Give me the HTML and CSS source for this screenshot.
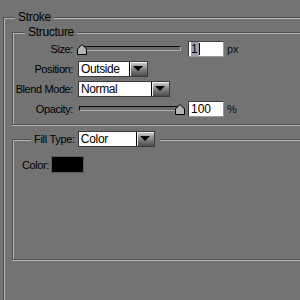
FILE: index.html
```html
<html>
  <head>
    <link rel="stylesheet" href="styles.css">
  </head>
  <body>
    <fieldset class="panel outer">
      <legend>Stroke</legend>

      <fieldset class="panel structure">
        <legend>Structure</legend>
        <div class="rows">
          <span class="label">Size:</span>
          <div class="ctl">
            <div class="slider">
              <div class="track"></div>
              <svg class="thumb" width="10" height="11" viewBox="0 0 10 11">
                <path d="M0.5 10.5 V5 L5 0.5 L9.5 5 V10.5 Z" fill="#b4b4b4" stroke="#000" />
              </svg>
            </div>
            <div class="field"><span class="hilite">1</span><span class="caret"></span></div>
            <span class="unit">px</span>
          </div>

          <span class="label">Position:</span>
          <div class="ctl">
            <div class="dropdown w-pos">
              <span class="value">Outside</span>
              <span class="arrow"></span>
            </div>
          </div>

          <span class="label">Blend Mode:</span>
          <div class="ctl">
            <div class="dropdown w-blend">
              <span class="value">Normal</span>
              <span class="arrow"></span>
            </div>
          </div>

          <span class="label">Opacity:</span>
          <div class="ctl">
            <div class="slider at-end">
              <div class="track"></div>
              <svg class="thumb" width="10" height="11" viewBox="0 0 10 11">
                <path d="M0.5 10.5 V5 L5 0.5 L9.5 5 V10.5 Z" fill="#b4b4b4" stroke="#000" />
              </svg>
            </div>
            <div class="field">100</div>
            <span class="unit">%</span>
          </div>
        </div>
      </fieldset>

      <fieldset class="panel fill">
        <legend>
          <span class="label">Fill Type:</span>
          <div class="dropdown w-fill">
            <span class="value">Color</span>
            <span class="arrow"></span>
          </div>
        </legend>
        <div class="color-row">
          <span class="label">Color:</span>
          <span class="swatch"></span>
        </div>
      </fieldset>
    </fieldset>
  </body>
</html>
```
FILE: styles.css
```css
html,
body {
  margin: 0;
  height: 300px;
  overflow: hidden;
  background: #737373;
}
body {
  box-sizing: border-box;
  padding-top: 11px;
  font-family: "Liberation Sans", Arial, sans-serif;
  font-size: 11px;
  letter-spacing: -0.4px;
  color: #000;
}

.panel {
  margin: 0;
  padding: 0;
  min-width: 0;
  border: 1px solid #4f4f4f;
  border-right: 0;
  box-shadow: inset 1px 1px 0 #b6b6b6, 0 1px 0 #b6b6b6;
}
.panel > legend {
  padding: 0 3px;
  line-height: 12px;
  font-size: 12px;
  letter-spacing: -0.3px;
  background: #737373;
}

.outer {
  box-sizing: border-box;
  margin-left: 3px;
  height: 289px;
  border-bottom: 0;
  box-shadow: inset 1px 1px 0 #b6b6b6;
}
.outer > legend {
  margin-left: 11px;
}

.structure {
  margin: 3px 0 0 8px;
  padding: 3px 0 7px;
}
.structure > legend {
  margin-left: 12px;
}

.rows {
  display: grid;
  grid-template-columns: 60px auto;
  column-gap: 5px;
  row-gap: 4px;
}
.rows .label {
  text-align: right;
  line-height: 16px;
  height: 16px;
}
.ctl {
  display: flex;
  align-items: center;
  height: 16px;
}

.slider {
  position: relative;
  width: 108px;
  height: 16px;
  margin-left: -1px;
}
.track {
  position: absolute;
  left: 2px;
  right: 4px;
  top: 5px;
  height: 3px;
  background: #6a6a6a;
  border: 1px solid #0c0c0c;
  border-right-color: #b0b0b0;
  border-bottom-color: #b0b0b0;
}
.thumb {
  position: absolute;
  left: 0;
  top: 3px;
}
.at-end .thumb {
  left: auto;
  right: 0;
}

.field {
  box-sizing: border-box;
  width: 36px;
  height: 16px;
  margin-left: 3px;
  padding: 1px 0 0 2px;
  background: #fff;
  border: 1px solid #3c3c3c;
  border-right-color: #9a9a9a;
  border-bottom-color: #9a9a9a;
  line-height: 13px;
  font-size: 12px;
  letter-spacing: 0;
}
.hilite {
  background: #9d9fae;
  padding: 0 1px 0 0;
}
.caret {
  display: inline-block;
  width: 1px;
  height: 12px;
  background: #000;
  vertical-align: -2px;
}
.unit {
  margin-left: 3px;
  color: #0c0c0c;
  letter-spacing: 0;
}

.dropdown {
  box-sizing: border-box;
  display: flex;
  height: 16px;
  background: #fff;
  border: 1px solid #3a3a3a;
}
.dropdown .value {
  flex: 1;
  padding-left: 2px;
  line-height: 14px;
  font-size: 12px;
}
.arrow {
  position: relative;
  box-sizing: border-box;
  width: 18px;
  height: 14px;
  border-left: 1px solid #000;
  background: linear-gradient(#d4d4d4, #8a8a8a 45%, #4c4c4c);
  box-shadow: inset 1px 1px 0 #f0f0f0;
}
.arrow::after {
  content: "";
  position: absolute;
  left: 3px;
  top: 4px;
  border-left: 5px solid transparent;
  border-right: 5px solid transparent;
  border-top: 5px solid #000;
}
.w-pos {
  width: 70px;
}
.w-blend {
  width: 92px;
}
.w-fill {
  width: 77px;
}

.fill {
  margin: 6px 0 0 8px;
  padding: 10px 0 87px 9px;
}
.fill > legend {
  display: flex;
  align-items: center;
  margin-left: 9px;
  padding: 0 5px 0 3px;
  line-height: 16px;
  font-size: 11px;
}
.fill > legend .label {
  margin-right: 3px;
}

.color-row {
  display: flex;
  align-items: center;
  height: 15px;
}
.swatch {
  width: 31px;
  height: 15px;
  margin-left: 3px;
  background: #000;
  box-shadow: 0 0 0 1px #5a5a5a;
}
```
